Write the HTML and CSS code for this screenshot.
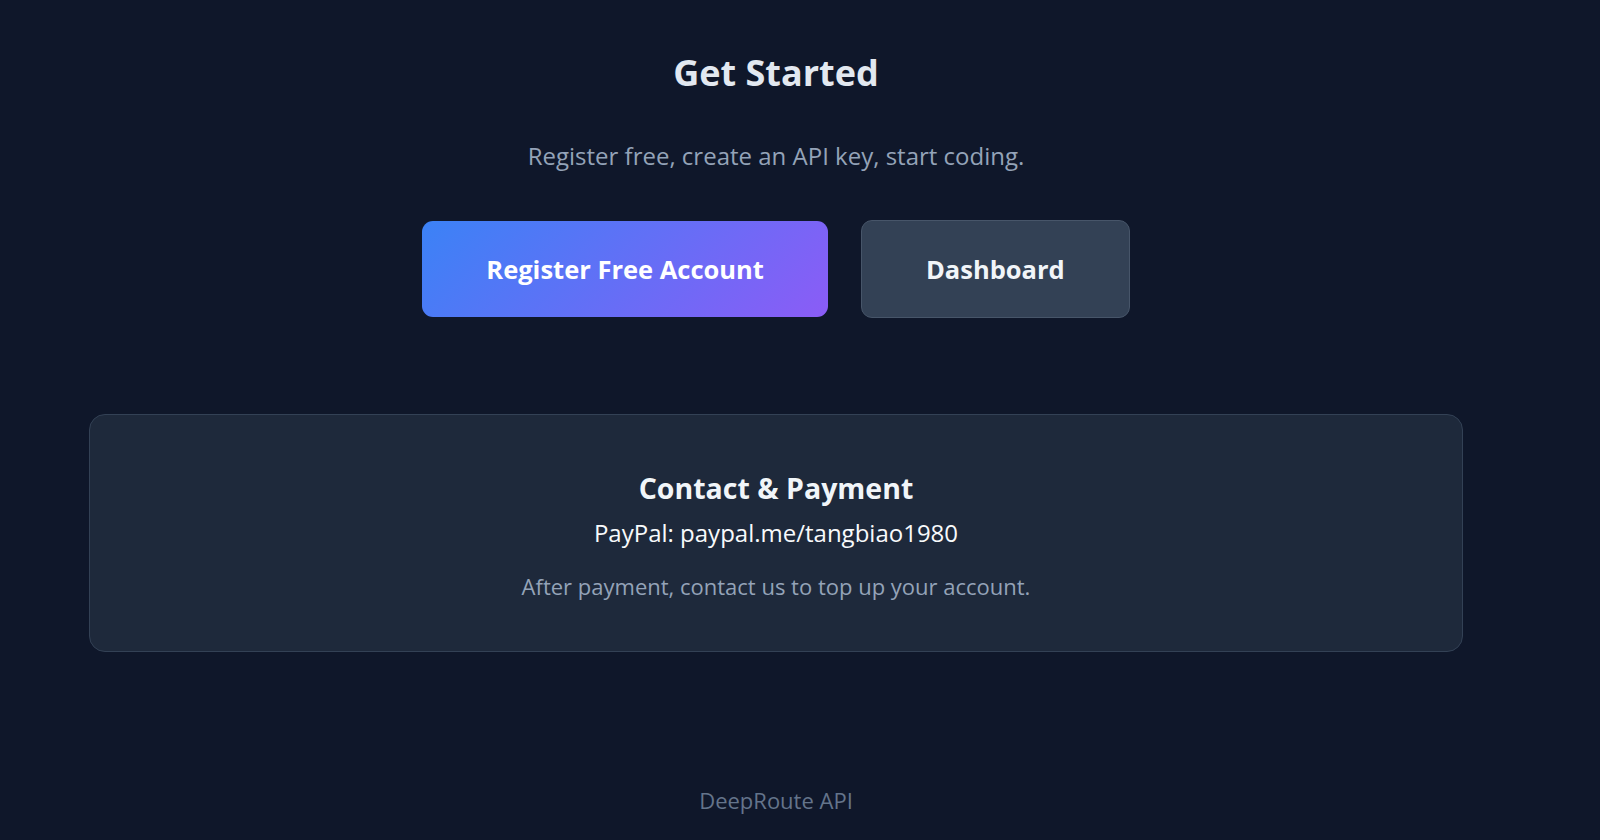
FILE: index.html
```html
<!DOCTYPE html>
<html lang="en">
<head>
    <meta charset="UTF-8">
    <meta name="viewport" content="width=device-width, initial-scale=1.0">
    <title>DeepRoute API - Get Started</title>
    <link rel="stylesheet" href="styles.css">
</head>
<body>

<div class="page">
    <!-- Call to action -->
    <section class="hero">
        <h2>Get Started</h2>
        <p class="lead">Register free, create an API key, start coding.</p>
        <div class="actions">
            <a href="#" class="btn btn-primary">Register Free Account</a>
            <a href="#" class="btn btn-secondary">Dashboard</a>
        </div>
    </section>

    <!-- Contact / payment box -->
    <section class="contact-card">
        <h3>Contact &amp; Payment</h3>
        <p class="paypal">PayPal: paypal.me/tangbiao1980</p>
        <p class="note">After payment, contact us to top up your account.</p>
    </section>
</div>

<footer>
    DeepRoute API
</footer>

</body>
</html>
```

FILE: styles.css
```css
body {
    font-family: 'Open Sans', 'Noto Sans', sans-serif;
    margin: 0;
    padding: 0 48px 0 0;
    background-color: #0f172a;
    color: #e2e8f0;
}
.page {
    max-width: 1374px;
    margin: 0 auto;
}
.hero {
    text-align: center;
    padding-top: 51px;
}
.hero h2 {
    margin: 0;
    font-size: 36px;
    line-height: 43px;
    font-weight: 700;
    color: #e2e8f0;
}
.lead {
    margin: 47px 0 49px;
    font-size: 24px;
    line-height: 30px;
    color: #94a3b8;
}
.actions {
    display: flex;
    justify-content: center;
    align-items: center;
    gap: 33px;
}
.btn {
    display: inline-block;
    padding: 32px 64px;
    font-size: 25.5px;
    line-height: 32px;
    font-weight: 700;
    text-decoration: none;
    border-radius: 11px;
}
    .btn-primary {
        background: linear-gradient(135deg, #3b82f6, #8b5cf6);
        color: #ffffff;
    }
    .btn-secondary {
        background-color: #334155;
        border: 1px solid #475569;
        color: #f1f5f9;
    }
.contact-card {
    margin-top: 96px;
    padding: 56px 32px 50px;
    background-color: #1e293b;
    border: 1px solid #334155;
    border-radius: 16px;
    text-align: center;
}
    .contact-card h3 {
        margin: 0;
        font-size: 28.5px;
        line-height: 34px;
        font-weight: 700;
        color: #f1f5f9;
    }
.paypal {
    margin: 11px 0 0;
    font-size: 24px;
    line-height: 33px;
    color: #f8fafc;
}
.note {
    margin: 22px 0 0;
    font-size: 22px;
    line-height: 30px;
    color: #94a3b8;
}
footer {
    text-align: center;
    padding: 133px 48px 0 0;
    margin-right: -48px;
    font-size: 22px;
    line-height: 30px;
    color: #64748b;
}
```
